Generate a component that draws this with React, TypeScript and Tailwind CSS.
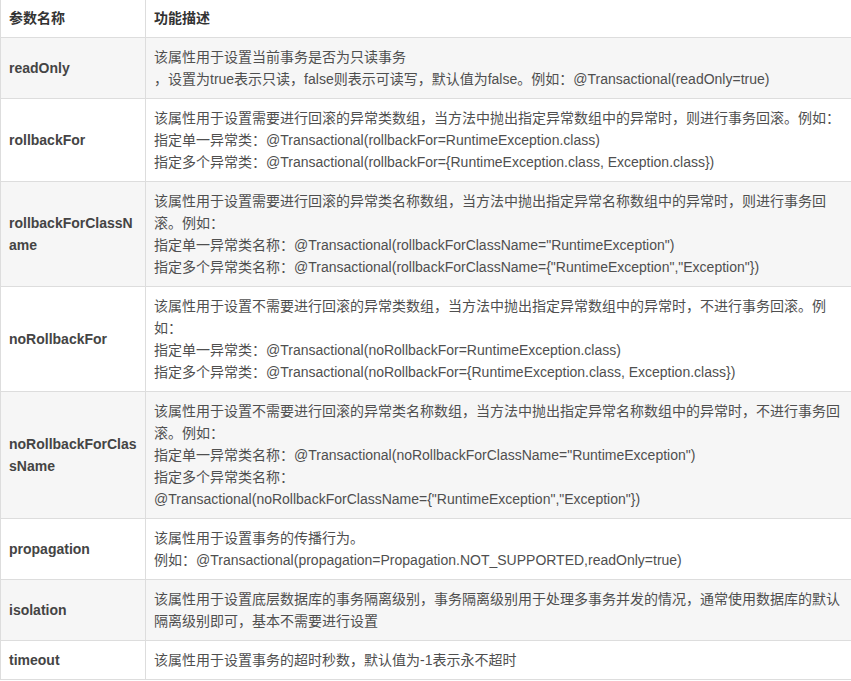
const rows: { name: string[]; desc: string[] }[] = [
  {
    name: ['readOnly'],
    desc: [
      '该属性用于设置当前事务是否为只读事务',
      '，设置为true表示只读，false则表示可读写，默认值为false。例如：@Transactional(readOnly=true)',
    ],
  },
  {
    name: ['rollbackFor'],
    desc: [
      '该属性用于设置需要进行回滚的异常类数组，当方法中抛出指定异常数组中的异常时，则进行事务回滚。例如：',
      '指定单一异常类：@Transactional(rollbackFor=RuntimeException.class)',
      '指定多个异常类：@Transactional(rollbackFor={RuntimeException.class, Exception.class})',
    ],
  },
  {
    name: ['rollbackForClassN', 'ame'],
    desc: [
      '该属性用于设置需要进行回滚的异常类名称数组，当方法中抛出指定异常名称数组中的异常时，则进行事务回',
      '滚。例如：',
      '指定单一异常类名称：@Transactional(rollbackForClassName="RuntimeException")',
      '指定多个异常类名称：@Transactional(rollbackForClassName={"RuntimeException","Exception"})',
    ],
  },
  {
    name: ['noRollbackFor'],
    desc: [
      '该属性用于设置不需要进行回滚的异常类数组，当方法中抛出指定异常数组中的异常时，不进行事务回滚。例',
      '如：',
      '指定单一异常类：@Transactional(noRollbackFor=RuntimeException.class)',
      '指定多个异常类：@Transactional(noRollbackFor={RuntimeException.class, Exception.class})',
    ],
  },
  {
    name: ['noRollbackForClas', 'sName'],
    desc: [
      '该属性用于设置不需要进行回滚的异常类名称数组，当方法中抛出指定异常名称数组中的异常时，不进行事务回',
      '滚。例如：',
      '指定单一异常类名称：@Transactional(noRollbackForClassName="RuntimeException")',
      '指定多个异常类名称：',
      '@Transactional(noRollbackForClassName={"RuntimeException","Exception"})',
    ],
  },
  {
    name: ['propagation'],
    desc: [
      '该属性用于设置事务的传播行为。',
      '例如：@Transactional(propagation=Propagation.NOT_SUPPORTED,readOnly=true)',
    ],
  },
  {
    name: ['isolation'],
    desc: [
      '该属性用于设置底层数据库的事务隔离级别，事务隔离级别用于处理多事务并发的情况，通常使用数据库的默认',
      '隔离级别即可，基本不需要进行设置',
    ],
  },
  {
    name: ['timeout'],
    desc: ['该属性用于设置事务的超时秒数，默认值为-1表示永不超时'],
  },
];

export default function App() {
  return (
    <div
      className="min-h-screen bg-white text-[14px] leading-[22px] text-[#4f4f4f]"
      style={{ fontFamily: '"Liberation Sans", "Noto Sans CJK SC", sans-serif' }}
    >
      <table className="w-full border-collapse">
        <thead>
          {/* 表头 */}
          <tr className="bg-white border-b border-[#dddddd]">
            <th className="w-[145px] border-l border-r border-[#dddddd] px-2 pt-[7px] pb-2 text-left font-bold text-[#333]">
              参数名称
            </th>
            <th className="px-2 pt-[7px] pb-2 text-left font-bold text-[#333]">功能描述</th>
          </tr>
        </thead>
        <tbody>
          {rows.map((row, i) => (
            <tr
              key={i}
              className={`border-b border-[#dddddd] ${i % 2 === 0 ? 'bg-[#f6f6f6]' : 'bg-white'}`}
            >
              <td className="w-[145px] border-l border-r border-[#dddddd] px-2 py-2 align-middle font-bold text-[#444]">
                {row.name.map((n) => (
                  <div key={n} className="whitespace-nowrap">{n}</div>
                ))}
              </td>
              <td className="px-2 py-2 align-middle">
                {row.desc.map((line, j) => (
                  <div key={j} className="whitespace-nowrap">{line}</div>
                ))}
              </td>
            </tr>
          ))}
        </tbody>
      </table>
    </div>
  );
}
